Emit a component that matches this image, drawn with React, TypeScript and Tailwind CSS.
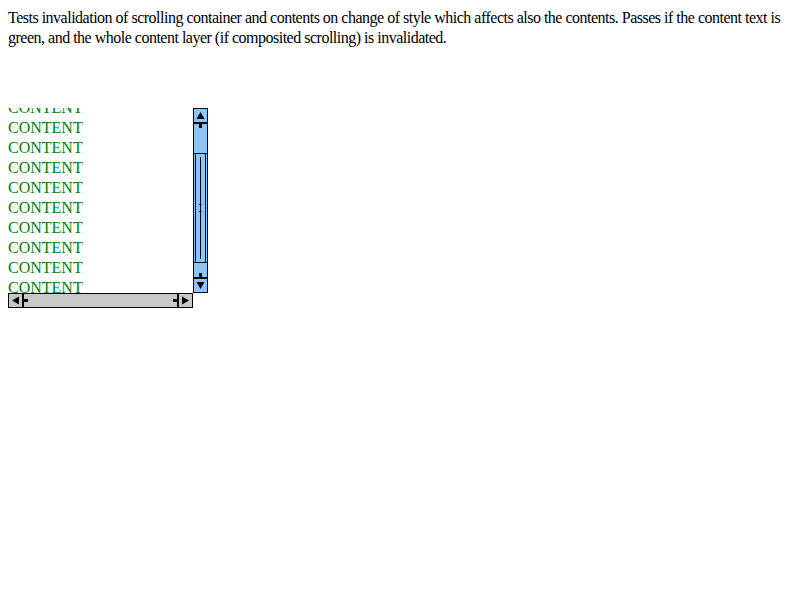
import React from "react";

const lines = Array.from({ length: 13 }, (_, i) => i);

function VScrollbar() {
  return (
    <div className="relative w-[15px] h-[185px] bg-[#8cc4ff] border border-black flex flex-col">
      <div className="h-[13px] flex items-center justify-center">
        <svg width="13" height="13" viewBox="0 0 13 13">
          <polygon points="2.5,10 6.5,3 10.5,10" fill="black" />
        </svg>
      </div>
      <div className="h-[2px] bg-black" />
      <div className="h-[29px] relative">
        <div className="absolute left-[5px] top-0 w-[3px] h-[4px] bg-black" />
      </div>
      <div className="h-[110px] border-y border-black relative">
        <svg width="13" height="108" viewBox="0 0 13 108" className="block">
          <line x1="1.5" y1="0" x2="1.5" y2="108" stroke="black" strokeWidth="1" />
          <line x1="11.5" y1="0" x2="11.5" y2="108" stroke="black" strokeWidth="1" />
          <line x1="6.5" y1="3" x2="6.5" y2="105" stroke="black" strokeWidth="1" />
          <line x1="5" y1="50.5" x2="8" y2="50.5" stroke="black" strokeWidth="1" />
          <line x1="5" y1="57.5" x2="8" y2="57.5" stroke="black" strokeWidth="1" />
        </svg>
      </div>
      <div className="h-[14px] relative">
        <div className="absolute left-[5px] bottom-0 w-[3px] h-[4px] bg-black" />
      </div>
      <div className="h-[2px] bg-black" />
      <div className="h-[13px] flex items-center justify-center">
        <svg width="13" height="13" viewBox="0 0 13 13">
          <polygon points="2.5,3 6.5,10 10.5,3" fill="black" />
        </svg>
      </div>
    </div>
  );
}

function HScrollbar() {
  return (
    <div className="w-[185px] h-[15px] bg-[#c8c8c8] border border-black flex">
      <div className="w-[13px] flex items-center justify-center">
        <svg width="13" height="13" viewBox="0 0 13 13">
          <polygon points="10,2.5 3,6.5 10,10.5" fill="black" />
        </svg>
      </div>
      <div className="w-[2px] bg-black" />
      <div className="flex-1 relative">
        <div className="absolute left-0 top-[5px] w-[4px] h-[3px] bg-black" />
        <div className="absolute right-0 top-[5px] w-[4px] h-[3px] bg-black" />
      </div>
      <div className="w-[2px] bg-black" />
      <div className="w-[13px] flex items-center justify-center">
        <svg width="13" height="13" viewBox="0 0 13 13">
          <polygon points="3,2.5 10,6.5 3,10.5" fill="black" />
        </svg>
      </div>
    </div>
  );
}

export default function App() {
  return (
    <div className="min-h-[600px] bg-white p-2 font-['Liberation_Serif','Times_New_Roman',serif] text-[16px] text-black">
      <p className="leading-[20px] tracking-[-0.5px] whitespace-nowrap">
        Tests invalidation of scrolling container and contents on change of style which affects also the contents. Passes if the content text is
        <br />
        green, and the whole content layer (if composited scrolling) is invalidated.
      </p>
      <div className="mt-[60px] grid grid-cols-[185px_15px] grid-rows-[185px_15px] w-[200px] h-[200px]">
        <div className="overflow-hidden">
          <div className="mt-[-50px]">
            {lines.map((i) => (
              <div key={i} className="h-[20px] leading-[20px] text-[#008000]">
                CONTENT
              </div>
            ))}
          </div>
        </div>
        <VScrollbar />
        <HScrollbar />
        <div />
      </div>
    </div>
  );
}
